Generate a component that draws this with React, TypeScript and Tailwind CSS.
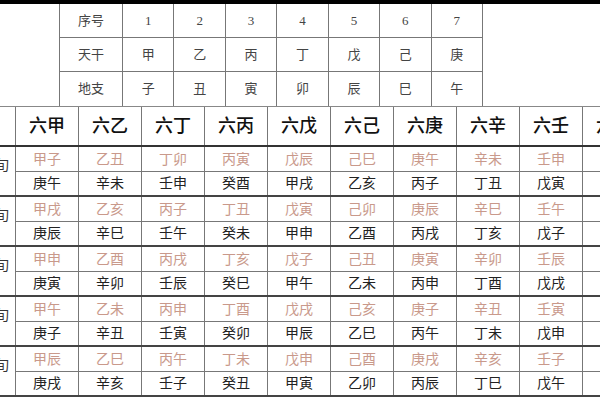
const heads = ["六甲", "六乙", "六丁", "六丙", "六戊", "六己", "六庚", "六辛", "六壬", "六癸"];

const groups: [string[], string[]][] = [
  [
    ["甲子", "乙丑", "丁卯", "丙寅", "戊辰", "己巳", "庚午", "辛未", "壬申", "癸酉"],
    ["庚午", "辛未", "壬申", "癸酉", "甲戌", "乙亥", "丙子", "丁丑", "戊寅", "己卯"],
  ],
  [
    ["甲戌", "乙亥", "丙子", "丁丑", "戊寅", "己卯", "庚辰", "辛巳", "壬午", "癸未"],
    ["庚辰", "辛巳", "壬午", "癸未", "甲申", "乙酉", "丙戌", "丁亥", "戊子", "己丑"],
  ],
  [
    ["甲申", "乙酉", "丙戌", "丁亥", "戊子", "己丑", "庚寅", "辛卯", "壬辰", "癸巳"],
    ["庚寅", "辛卯", "壬辰", "癸巳", "甲午", "乙未", "丙申", "丁酉", "戊戌", "己亥"],
  ],
  [
    ["甲午", "乙未", "丙申", "丁酉", "戊戌", "己亥", "庚子", "辛丑", "壬寅", "癸卯"],
    ["庚子", "辛丑", "壬寅", "癸卯", "甲辰", "乙巳", "丙午", "丁未", "戊申", "己酉"],
  ],
  [
    ["甲辰", "乙巳", "丙午", "丁未", "戊申", "己酉", "庚戌", "辛亥", "壬子", "癸丑"],
    ["庚戌", "辛亥", "壬子", "癸丑", "甲寅", "乙卯", "丙辰", "丁巳", "戊午", "己未"],
  ],
];

const topRows = [
  ["序号", "1", "2", "3", "4", "5", "6", "7"],
  ["天干", "甲", "乙", "丙", "丁", "戊", "己", "庚"],
  ["地支", "子", "丑", "寅", "卯", "辰", "巳", "午"],
];

function TopTable() {
  return (
    <div className="ml-[59px] w-[424px] border-l border-[#777]">
      {topRows.map((row, i) => (
        <div
          key={i}
          className={`grid grid-cols-[63px_repeat(7,minmax(0,1fr))] ${i < 2 ? "h-[34px] border-b border-[#777]" : "h-[34px]"}`}
        >
          {row.map((c, j) => (
            <div
              key={j}
              className="flex items-center justify-center border-r border-[#777] text-[13px] text-[#444]"
            >
              {c}
            </div>
          ))}
        </div>
      ))}
    </div>
  );
}

function BigTable() {
  return (
    <div className="border-t border-[#888]">
      <div className="grid h-[40px] grid-cols-[16px_repeat(10,63px)] border-b-2 border-[#333]">
        <div className="border-r border-[#777]" />
        {heads.map((h) => (
          <div
            key={h}
            className="flex items-center justify-center whitespace-nowrap border-r border-[#777] text-[18px] font-medium text-[#111]"
          >
            {h}
          </div>
        ))}
      </div>
      {groups.map(([top, bottom], gi) => (
        <div key={gi} className="flex h-[50px] border-b-2 border-[#444]">
          <div className="flex w-[16px] shrink-0 items-center justify-end overflow-hidden border-r border-[#777] pb-[12px] pr-[6px]">
            <span className="whitespace-nowrap text-[14px] text-[#333]">旬</span>
          </div>
          {top.map((t, ci) => (
            <div key={ci} className="flex w-[63px] shrink-0 flex-col border-r border-[#777]">
              <div className="flex h-[25px] items-center justify-center border-b border-[#777] text-[14px] text-[#c9998b]">
                {t}
              </div>
              <div className="flex h-[23px] items-center justify-center text-[14px] text-[#222]">
                {bottom[ci]}
              </div>
            </div>
          ))}
        </div>
      ))}
    </div>
  );
}

export default function App() {
  return (
    <div
      className="h-[400px] w-[600px] overflow-hidden bg-white"
      style={{ fontFamily: '"Liberation Serif", "Noto Sans CJK SC", serif' }}
    >
      <div className="h-[4px] bg-black" />
      <TopTable />
      <BigTable />
    </div>
  );
}
